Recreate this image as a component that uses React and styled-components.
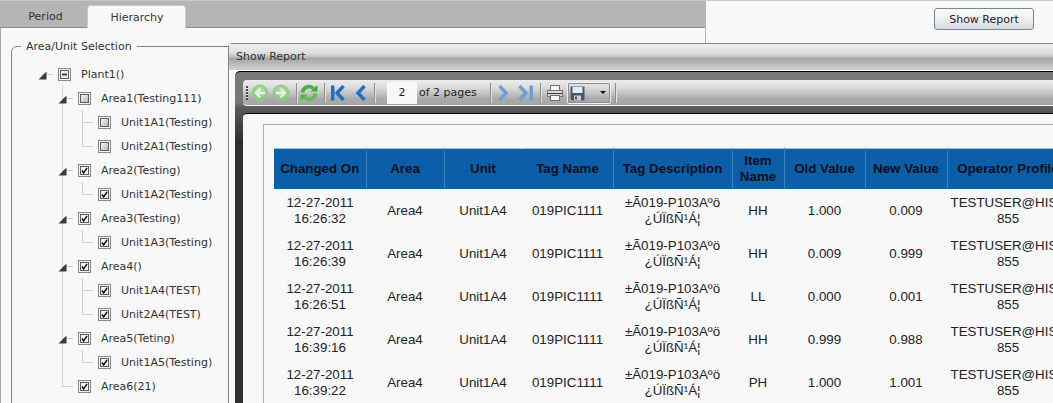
import styled, { createGlobalStyle } from 'styled-components';

const GlobalStyle = createGlobalStyle`
  html, body {
    margin: 0;
    padding: 0;
    background: #f8f8f8;
  }
`;

const Page = styled.div`
  position: relative;
  display: flex;
  width: 1053px;
  height: 403px;
  overflow: hidden;
  background: #f8f8f8;
  border-top: 1px solid #c4cac4;
  box-sizing: border-box;
  font-family: "DejaVu Sans", Verdana, sans-serif;
  font-size: 11px;
  color: #333;
`;

const LeftPane = styled.div`
  width: 705px;
  flex-shrink: 0;
  border-left: 1px solid #a8a8a8;
  box-sizing: border-box;
`;

const RightPane = styled.div`
  flex: 1;
  display: flex;
  justify-content: flex-end;
  align-items: flex-start;
  padding: 7px 19px 0 0;
  border-left: 1px solid #b4b4b4;
`;

const ReportButton = styled.button`
  width: 100px;
  height: 22px;
  padding: 0;
  font: inherit;
  color: #222;
  background: linear-gradient(#fafafa, #f0f0f0 50%, #d4d8dc);
  border: 1px solid #76889a;
  border-radius: 3px;
`;

const TabStrip = styled.div`
  display: flex;
  align-items: flex-end;
  height: 26px;
  background: #b5b5b5;
  border-bottom: 1px solid #8c8c8c;
  margin-left: -1px;
`;

const Tab = styled.div`
  display: flex;
  align-items: center;
  justify-content: center;
  width: ${(p) => p.$width}px;
  height: 23px;
  box-sizing: border-box;
  padding-left: ${(p) => (p.$active ? '1px' : '4px')};
  margin-bottom: ${(p) => (p.$active ? '-1px' : '0')};
  background: ${(p) => (p.$active ? '#f8f8f8' : 'transparent')};
  border: 1px solid ${(p) => (p.$active ? '#c6cec6' : 'transparent')};
  border-bottom: 0;
  border-radius: 4px 4px 0 0;
`;

const Group = styled.fieldset`
  width: 300px;
  height: 400px;
  margin: 12px 0 0 10px;
  padding: 0;
  box-sizing: border-box;
  border: 1px solid #7a8490;
  border-radius: 6px;
`;

const GroupTitle = styled.legend`
  margin-left: 9px;
  padding: 0 5px;
  font-size: 11px;
  line-height: 13px;
`;

const Tree = styled.ul`
  list-style: none;
  margin: ${(p) => (p.$root ? '9px 0 0 30px' : '0 0 0 20px')};
  padding: 0;
`;

const Node = styled.li`
  background: ${(p) =>
    p.$root
      ? 'none'
      : `linear-gradient(#cfcfcf, #cfcfcf) no-repeat 0 0 / 1px ${p.$last ? '12px' : '100%'}`};
`;

const Row = styled.div`
  display: flex;
  align-items: center;
  height: 24px;
`;

const Connector = styled.span`
  display: flex;
  align-items: center;
  width: 16px;
  height: 100%;
  flex-shrink: 0;
  background: linear-gradient(#cfcfcf, #cfcfcf) no-repeat 0 50% / 11px 1px;
`;

const Expander = styled.svg`
  width: 9px;
  height: 9px;
  margin: 3px 0 0 -4px;
`;

const Box = styled.svg`
  width: 13px;
  height: 13px;
  flex-shrink: 0;
  margin-right: 10px;
`;

const Dialog = styled.div`
  position: absolute;
  left: 228px;
  top: 42px;
  right: -20px;
  bottom: -20px;
  display: flex;
  flex-direction: column;
  background: #f8f8f8;
  border: 1px solid #858585;
  border-radius: 4px 0 0 0;
`;

const TitleBar = styled.div`
  height: 26px;
  padding-left: 7px;
  line-height: 26px;
  flex-shrink: 0;
  background: linear-gradient(#f0f0f0, #dedede 35%, #c4c4c4 48%, #a6a6a6 56%, #bdbdbd 80%, #d0d0d0);
  border-bottom: 1px solid #fff;
`;

const Frame = styled.div`
  flex: 1;
  display: flex;
  flex-direction: column;
  margin-left: 6px;
  padding: 8px 0 0 8px;
  background: linear-gradient(#787878 30px, #5a5a5a 36px, #2e2e2e 70px);
  border-top: 1px solid #000;
  border-radius: 5px 0 0 0;
`;

const Toolbar = styled.div`
  display: flex;
  align-items: center;
  height: 26px;
  flex-shrink: 0;
  padding-left: 3px;
  box-sizing: border-box;
  background: linear-gradient(#ececec, #dcdcdc 30%, #c6c6c6 50%, #aaa 75%, #a6a6a6);
  border-bottom: 1px solid #f4f4f4;
  border-radius: 4px 0 0 4px;
`;

const Grip = styled.span`
  width: 2px;
  height: 14px;
  margin-right: 3px;
  background: repeating-linear-gradient(#444 0 2px, #eee 2px 3px);
`;

const ToolIcon = styled.svg`
  width: ${(p) => p.$w}px;
  height: 18px;
  flex-shrink: 0;
  margin-left: ${(p) => p.$gap || 0}px;
`;

const Separator = styled.span`
  width: 1px;
  height: 20px;
  flex-shrink: 0;
  margin-left: ${(p) => p.$gap || 0}px;
  background: #8e8e8e;
  box-shadow: 1px 0 0 #e4e4e4;
`;

const PageInput = styled.span`
  width: 30px;
  height: 22px;
  flex-shrink: 0;
  margin-left: 12px;
  line-height: 22px;
  text-align: center;
  color: #222;
  background: #f8f8f8;
`;

const PageCount = styled.span`
  width: 71px;
  flex-shrink: 0;
  margin-left: 2px;
  color: #222;
`;

const SaveMenu = styled.span`
  display: flex;
  align-items: center;
  justify-content: space-between;
  width: 44px;
  height: 22px;
  flex-shrink: 0;
  box-sizing: border-box;
  margin-left: 4px;
  padding: 0 4px 0 2px;
  border: 1px solid #f0f0f0;
  outline: 1px solid #8c8c8c;
  outline-offset: -2px;
  border-radius: 2px;
`;

const Caret = styled.span`
  width: 0;
  height: 0;
  border: 3px solid transparent;
  border-top: 3px solid #111;
  border-bottom: 0;
`;

const ReportBody = styled.div`
  flex: 1;
  margin-top: 7px;
  padding: 10px 0 0 20px;
  background: #f8f8f8;
  border-top: 1px solid #000;
  border-radius: 4px 0 0 0;
`;

const Sheet = styled.div`
  height: 400px;
  padding: 23px 0 0 10px;
  border-top: 1px solid #adadad;
  border-left: 1px solid #adadad;
`;

const Table = styled.table`
  table-layout: fixed;
  width: 795px;
  border-collapse: collapse;
  font-family: "Liberation Sans", Arial, sans-serif;
  font-size: 13.33px;
  line-height: 16px;
  text-align: center;
  color: #222;
`;

const HeadRow = styled.tr`
  height: 40px;
  background: #0a5fa8;
  border-top: 1px solid #9cc0de;
`;

const Th = styled.th`
  padding: 0;
  font-weight: bold;
  color: #0c0c14;
  border-right: 1px solid ${(p) => (p.$plain ? 'transparent' : '#3f80ba')};
`;

const BodyRow = styled.tr`
  height: 43px;
`;

const Td = styled.td`
  padding: 2px 0 0;
  white-space: nowrap;
`;

const columns = [92, 78, 78, 91, 119, 52, 81, 82, 122];

const headers = ['Changed On', 'Area', 'Unit', 'Tag Name', 'Tag Description', 'Item Name', 'Old Value', 'New Value', 'Operator Profile'];

const records = [
  { time: '16:26:32', item: 'HH', before: '1.000', after: '0.009' },
  { time: '16:26:39', item: 'HH', before: '0.009', after: '0.999' },
  { time: '16:26:51', item: 'LL', before: '0.000', after: '0.001' },
  { time: '16:39:16', item: 'HH', before: '0.999', after: '0.988' },
  { time: '16:39:22', item: 'PH', before: '1.000', after: '1.001' },
];

const areas = [
  { label: 'Area1(Testing111)', state: 'empty', units: [['Unit1A1(Testing)', 'empty'], ['Unit2A1(Testing)', 'empty']] },
  { label: 'Area2(Testing)', state: 'checked', units: [['Unit1A2(Testing)', 'checked']] },
  { label: 'Area3(Testing)', state: 'checked', units: [['Unit1A3(Testing)', 'checked']] },
  { label: 'Area4()', state: 'checked', units: [['Unit1A4(TEST)', 'checked'], ['Unit2A4(TEST)', 'checked']] },
  { label: 'Area5(Teting)', state: 'checked', units: [['Unit1A5(Testing)', 'checked']] },
  { label: 'Area6(21)', state: 'checked', units: [] },
];

const CheckBox = ({ state }) => (
  <Box viewBox="0 0 13 13">
    <defs>
      <linearGradient id="boxFill" x1="0" y1="0" x2="1" y2="1">
        <stop offset="0" stopColor="#fcfcfc" />
        <stop offset="1" stopColor="#b4b4b4" />
      </linearGradient>
    </defs>
    <rect x="0.5" y="0.5" width="12" height="12" fill="#f4f4f4" stroke="#8a8a8a" />
    <rect x="2.5" y="2.5" width="8" height="8" fill={state === 'empty' ? 'url(#boxFill)' : '#f2f2f2'} stroke="#5c5c5c" />
    {state === 'checked' && <path d="M4 6.5 L5.6 9 L9 4" fill="none" stroke="#111" strokeWidth="1.5" />}
    {state === 'mixed' && <rect x="4" y="5.5" width="5" height="2" fill="#444" />}
  </Box>
);

const Toggle = () => (
  <Expander viewBox="0 0 9 9">
    <path d="M8.5 0.5 V8.5 H0.5 Z" fill="#3a3a3a" />
  </Expander>
);

const TreeItem = ({ root, last, state, label, open, children }) => (
  <Node $root={root} $last={last}>
    <Row>
      <Connector>{open && <Toggle />}</Connector>
      <CheckBox state={state} />
      <span>{label}</span>
    </Row>
    {children}
  </Node>
);

const RoundArrow = ({ flip, gap }) => (
  <ToolIcon $w={18} $gap={gap} viewBox="0 0 18 18">
    <defs>
      <radialGradient id="greenBall" cx="0.5" cy="0.35" r="0.7">
        <stop offset="0" stopColor="#b8e2ac" />
        <stop offset="1" stopColor="#80bd76" />
      </radialGradient>
    </defs>
    <circle cx="9" cy="9" r="8" fill="url(#greenBall)" stroke="#9cc496" />
    <g transform={flip ? 'matrix(-1 0 0 1 18 0)' : undefined}>
      <path d="M14 9 H5.5 M9.5 4.5 L5 9 L9.5 13.5" fill="none" stroke="#e6f2e2" strokeWidth="2.4" />
    </g>
  </ToolIcon>
);

const Refresh = () => (
  <ToolIcon $w={18} $gap={3} viewBox="0 0 18 18">
    <path d="M2.5 8.5 A6.5 6.5 0 0 1 13.5 4.5" fill="none" stroke="#48b440" strokeWidth="3.6" />
    <path d="M15.5 9.5 A6.5 6.5 0 0 1 4.5 13.5" fill="none" stroke="#5cc250" strokeWidth="3.6" />
    <path d="M10.5 7.5 H17.5 V1 Z" fill="#3aa832" />
    <path d="M7.5 10.5 H0.5 V17 Z" fill="#50b844" />
  </ToolIcon>
);

const Chevron = ({ dir, bar, faded, gap, w }) => {
  const color = faded ? '#6f9fd4' : '#1f6fc4';
  const shape = dir === 'left'
    ? 'M9.5 2 L3 9 L9.5 16'
    : 'M1.5 2 L8 9 L1.5 16';
  return (
    <ToolIcon $w={w} $gap={gap} viewBox={`0 0 ${w} 18`}>
      {bar && dir === 'left' && <rect x="0" y="1.5" width="3.5" height="15" fill={color} />}
      {bar && dir === 'right' && <rect x={w - 3.5} y="1.5" width="3.5" height="15" fill={color} />}
      <path
        d={shape}
        transform={bar && dir === 'left' ? 'translate(3 0)' : undefined}
        fill="none"
        stroke={color}
        strokeWidth="3.4"
      />
    </ToolIcon>
  );
};

const Printer = () => (
  <ToolIcon $w={16} $gap={6} viewBox="0 0 16 18">
    <rect x="3.5" y="1.5" width="9" height="5" fill="#f6f6f6" stroke="#707070" />
    <rect x="0.5" y="6.5" width="15" height="6" fill="#dcdcdc" stroke="#707070" />
    <rect x="3.5" y="11.5" width="9" height="5" fill="#f6f6f6" stroke="#707070" />
    <path d="M1 9.5 H15" stroke="#333" />
  </ToolIcon>
);

const Floppy = () => (
  <ToolIcon $w={15} viewBox="0 0 15 18">
    <path d="M0.5 2.5 H14.5 V16.5 H2 L0.5 15 Z" fill="#46566a" />
    <rect x="2.5" y="3" width="10" height="6" fill="#e4ecf6" />
    <rect x="4" y="11.5" width="7" height="5" fill="#cfcfcf" />
    <rect x="5" y="12.5" width="2" height="3" fill="#46566a" />
  </ToolIcon>
);

export default function App() {
  return (
    <Page>
      <GlobalStyle />
      <LeftPane>
        <TabStrip>
          <Tab $width={87}>Period</Tab>
          <Tab $width={99} $active>Hierarchy</Tab>
        </TabStrip>
        <Group>
          <GroupTitle>Area/Unit Selection</GroupTitle>
          <Tree $root>
            <TreeItem root open state="mixed" label="Plant1()">
              <Tree>
                {areas.map((area, i) => (
                  <TreeItem
                    key={area.label}
                    last={i === areas.length - 1}
                    open={area.units.length > 0}
                    state={area.state}
                    label={area.label}
                  >
                    {area.units.length > 0 && (
                      <Tree>
                        {area.units.map(([label, state], j) => (
                          <TreeItem key={label} last={j === area.units.length - 1} state={state} label={label} />
                        ))}
                      </Tree>
                    )}
                  </TreeItem>
                ))}
              </Tree>
            </TreeItem>
          </Tree>
        </Group>
      </LeftPane>
      <RightPane>
        <ReportButton>Show Report</ReportButton>
      </RightPane>
      <Dialog>
        <TitleBar>Show Report</TitleBar>
        <Frame>
          <Toolbar>
            <Grip />
            <RoundArrow />
            <RoundArrow flip gap={3} />
            <Separator $gap={6} />
            <Refresh />
            <Separator $gap={6} />
            <Chevron dir="left" bar w={15} gap={6} />
            <Chevron dir="left" w={11} gap={9} />
            <Separator $gap={8} />
            <PageInput>2</PageInput>
            <PageCount>of 2 pages</PageCount>
            <Separator />
            <Chevron dir="right" faded w={11} gap={7} />
            <Chevron dir="right" bar faded w={15} gap={9} />
            <Separator $gap={7} />
            <Printer />
            <SaveMenu>
              <Floppy />
              <Caret />
            </SaveMenu>
            <Separator $gap={4} />
          </Toolbar>
          <ReportBody>
            <Sheet>
              <Table>
                <colgroup>
                  {columns.map((width, i) => (
                    <col key={i} width={width} />
                  ))}
                </colgroup>
                <thead>
                  <HeadRow>
                    {headers.map((name) => (
                      <Th key={name} $plain={name === 'Unit'}>{name}</Th>
                    ))}
                  </HeadRow>
                </thead>
                <tbody>
                  {records.map((row) => (
                    <BodyRow key={row.time}>
                      <Td>12-27-2011<br />{row.time}</Td>
                      <Td>Area4</Td>
                      <Td>Unit1A4</Td>
                      <Td>019PIC1111</Td>
                      <Td>±Ã019-P103Aºö<br />¿ÚÏßÑ¹Á¦</Td>
                      <Td>{row.item}</Td>
                      <Td>{row.before}</Td>
                      <Td>{row.after}</Td>
                      <Td>TESTUSER@HIST<br />855</Td>
                    </BodyRow>
                  ))}
                </tbody>
              </Table>
            </Sheet>
          </ReportBody>
        </Frame>
      </Dialog>
    </Page>
  );
}
